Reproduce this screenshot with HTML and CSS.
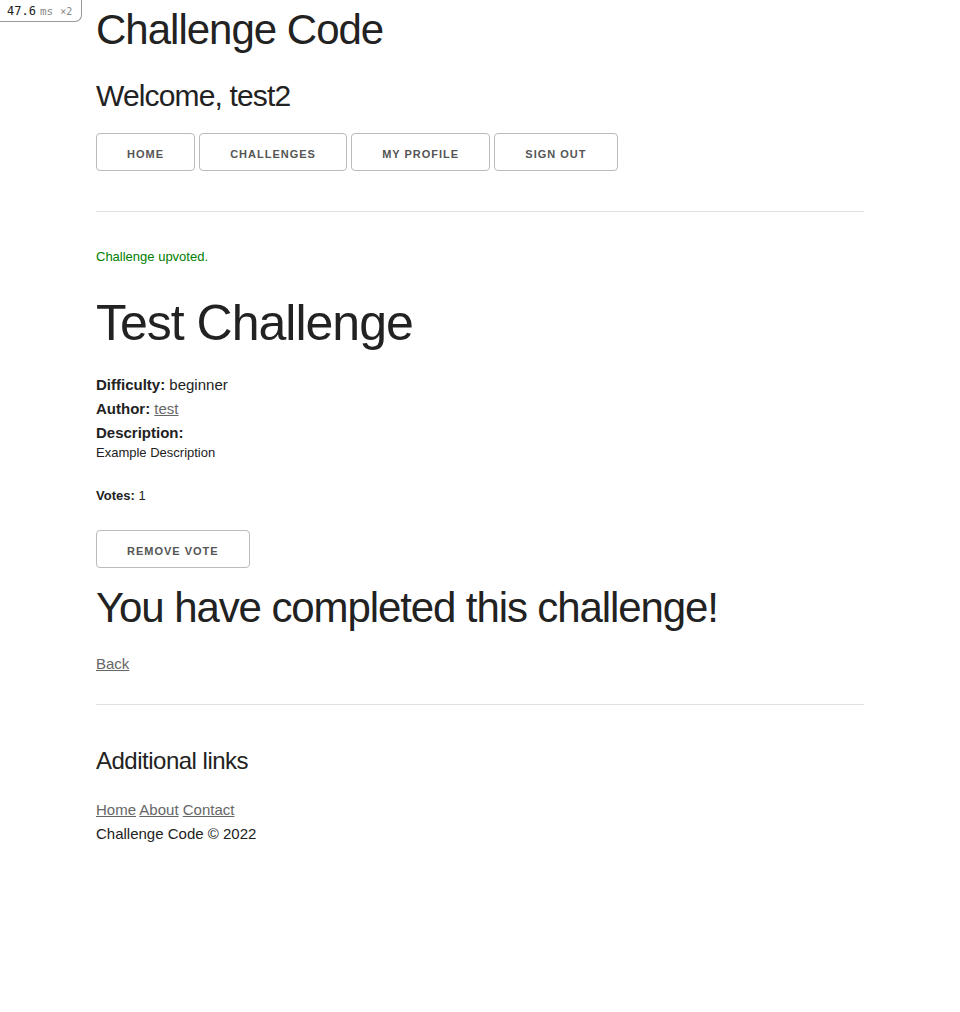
FILE: index.html
```html
<!DOCTYPE html>
<html lang="en">
<head>
<meta charset="utf-8">
<title>Challenge Code</title>
<link rel="stylesheet" href="styles.css">
</head>
<body>
<div class="perf-badge"><span class="perf-num">47.6</span><span class="perf-unit">ms</span><span class="perf-mult">×2</span></div>
<div class="container">
  <header>
    <h2 class="site-title">Challenge Code</h2>
    <h4 class="welcome">Welcome, test2</h4>
    <nav class="nav">
      <a class="button" href="#">Home</a>
      <a class="button" href="#">Challenges</a>
      <a class="button" href="#">My Profile</a>
      <a class="button" href="#">Sign Out</a>
    </nav>
  </header>
  <hr>
  <main>
    <p class="message">Challenge upvoted.</p>
    <h1 class="challenge-title">Test Challenge</h1>
    <div class="meta">
      <div><strong>Difficulty:</strong> beginner</div>
      <div><strong>Author:</strong> <a href="#">test</a></div>
      <div><strong>Description:</strong></div>
    </div>
    <p class="description">Example Description</p>
    <p class="votes"><strong>Votes:</strong> 1</p>
    <a class="button" href="#">Remove Vote</a>
    <h2 class="completed">You have completed this challenge!</h2>
    <div class="back"><a href="#">Back</a></div>
  </main>
  <hr class="footer-rule">
  <footer>
    <h5 class="footer-title">Additional links</h5>
    <div class="footer-links"><a href="#">Home</a> <a href="#">About</a> <a href="#">Contact</a></div>
    <div class="copyright">Challenge Code © 2022</div>
  </footer>
</div>
</body>
</html>
```

FILE: styles.css
```css
html, body {
  margin: 0;
  padding: 0;
}
body {
  font-family: "Liberation Sans", Arial, Helvetica, sans-serif;
  font-size: 15px;
  line-height: 1.6;
  color: #222;
  background: #fff;
}
.container {
  width: 80%;
  max-width: 960px;
  margin: 0 auto;
  box-sizing: border-box;
}
h1, h2, h4, h5 {
  font-weight: 400;
  margin: 0 0 20px 0;
}
.site-title {
  font-size: 42px;
  line-height: 1.25;
  letter-spacing: -1px;
  padding-top: 4px;
  margin-bottom: 19px;
}
.welcome {
  font-size: 30px;
  line-height: 1.35;
  letter-spacing: -0.85px;
  margin-bottom: 17px;
}
.nav {
  font-size: 15px;
}
.button {
  display: inline-block;
  box-sizing: border-box;
  height: 38px;
  padding: 0 30px;
  margin-bottom: 10px;
  color: #555;
  text-align: center;
  font-size: 11px;
  font-weight: 700;
  line-height: 40px;
  letter-spacing: 1px;
  text-transform: uppercase;
  text-decoration: none;
  white-space: nowrap;
  background: transparent;
  border: 1px solid #bbb;
  border-radius: 4px;
  vertical-align: top;
  overflow: hidden;
}
hr {
  margin: 30px 0 35px;
  border: 0;
  border-top: 1px solid #e1e1e1;
  height: 0;
}
.footer-rule {
  margin: 28px 0 38px;
}
a {
  color: #666;
}
.message {
  color: green;
  font-size: 13px;
  margin: 0 0 25px;
}
.challenge-title {
  font-size: 50px;
  line-height: 1.2;
  letter-spacing: -1px;
  margin-bottom: 20px;
}
.description {
  font-size: 13px;
  line-height: 16px;
  margin: 0 0 25px;
}
.votes {
  font-size: 13px;
  margin: 0 0 23px;
}
.completed {
  font-size: 42px;
  line-height: 1.25;
  letter-spacing: -1.1px;
  padding-top: 4px;
  margin-bottom: 18px;
}
.footer-title {
  font-size: 24px;
  line-height: 1.5;
  letter-spacing: -0.5px;
  margin-bottom: 19px;
}
.perf-badge {
  position: absolute;
  top: 0;
  left: 0;
  height: 21px;
  width: 74px;
  padding-left: 7px;
  box-sizing: content-box;
  background: #fff;
  border: 1px solid #999;
  border-top: 0;
  border-left: 0;
  border-bottom-right-radius: 7px;
  font-family: "DejaVu Sans Mono", monospace;
  line-height: 21px;
  white-space: nowrap;
}
.perf-num {
  font-size: 12px;
  color: #222;
}
.perf-unit {
  font-size: 11px;
  color: #888;
  margin-left: 4px;
}
.perf-mult {
  font-size: 10px;
  color: #888;
  margin-left: 7px;
}
```
